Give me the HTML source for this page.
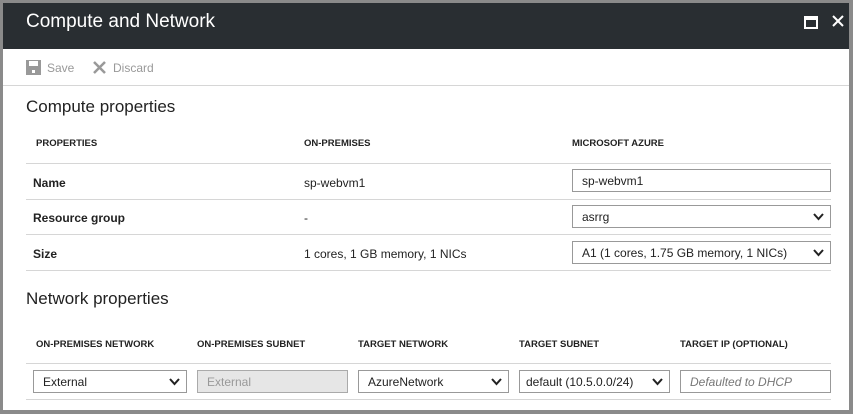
<!DOCTYPE html><html><head><style>
body{margin:0;width:853px;height:414px;background:#8a8a8a;font-family:"Liberation Sans",sans-serif;overflow:hidden;position:relative}
.p{position:absolute;left:3px;top:3px;width:846px;height:407px;background:#fff}
.h{position:absolute;left:0;top:0;width:846px;height:46px;background:#292e32;color:#fff}
.a{position:absolute}
.t{font-size:17px;color:#222}
.lb{font-size:9.5px;font-weight:bold;color:#222}
.c{font-size:12px;color:#222}
.ln{position:absolute;height:1px;background:#d6d6d6}
.in{position:absolute;border:1px solid #999;box-sizing:border-box;height:23px;font-size:12px;padding:4px 9px;color:#222;background:#fff}
.in svg{position:absolute;right:6px;top:7px}
</style></head><body>
<div class="p">
<div class="h"><div class="a" style="left:23px;top:8px;font-size:19px">Compute and Network</div>
<div class="a" style="left:801px;top:13px;width:10px;height:7px;border:2px solid #fff;border-top-width:4px"></div>
<svg class="a" style="left:829px;top:12px" width="12" height="12"><path d="M1 1L11 11M11 1L1 11" stroke="#fff" stroke-width="2"/></svg></div>
<svg class="a" style="left:23px;top:57px" width="15" height="15"><path d="M0 0H15V15H0Z" fill="#999"/><rect x="3" y="1" width="9" height="5" fill="#fff"/><rect x="6" y="10" width="3" height="3" fill="#fff"/></svg>
<div class="a c" style="left:44px;top:58px;color:#999">Save</div>
<svg class="a" style="left:90px;top:58px" width="13" height="13"><path d="M1 1L12 12M12 1L1 12" stroke="#999" stroke-width="2.5"/></svg>
<div class="a c" style="left:110px;top:58px;color:#999">Discard</div>
<div class="ln" style="left:0;top:82px;width:846px"></div>
<div class="a t" style="left:23px;top:94px">Compute properties</div>
<div class="a lb" style="left:33px;top:135px">PROPERTIES</div>
<div class="a lb" style="left:301px;top:135px">ON-PREMISES</div>
<div class="a lb" style="left:569px;top:135px">MICROSOFT AZURE</div>
<div class="ln" style="left:23px;top:160px;width:805px"></div>
<div class="ln" style="left:23px;top:196px;width:805px"></div>
<div class="ln" style="left:23px;top:231px;width:805px"></div>
<div class="ln" style="left:23px;top:267px;width:805px"></div>
<div class="a c" style="left:30px;top:173px;font-weight:bold">Name</div>
<div class="a c" style="left:30px;top:208px;font-weight:bold">Resource group</div>
<div class="a c" style="left:30px;top:244px;font-weight:bold">Size</div>
<div class="a c" style="left:301px;top:173px">sp-webvm1</div>
<div class="a c" style="left:301px;top:208px">-</div>
<div class="a c" style="left:301px;top:244px">1 cores, 1 GB memory, 1 NICs</div>
<div class="in" style="left:569px;top:166px;width:259px">sp-webvm1</div>
<div class="in" style="left:569px;top:202px;width:259px">asrrg<svg width="11" height="8"><path d="M1 1L5.5 6L10 1" stroke="#222" stroke-width="2" fill="none"/></svg></div>
<div class="in" style="left:569px;top:238px;width:259px">A1 (1 cores, 1.75 GB memory, 1 NICs)<svg width="11" height="8"><path d="M1 1L5.5 6L10 1" stroke="#222" stroke-width="2" fill="none"/></svg></div>
<div class="a t" style="left:23px;top:286px">Network properties</div>
<div class="a lb" style="left:33px;top:336px">ON-PREMISES NETWORK</div>
<div class="a lb" style="left:194px;top:336px">ON-PREMISES SUBNET</div>
<div class="a lb" style="left:355px;top:336px">TARGET NETWORK</div>
<div class="a lb" style="left:516px;top:336px">TARGET SUBNET</div>
<div class="a lb" style="left:677px;top:336px">TARGET IP (OPTIONAL)</div>
<div class="ln" style="left:23px;top:360px;width:805px"></div>
<div class="ln" style="left:23px;top:396px;width:805px"></div>
<div class="in" style="left:30px;top:367px;width:154px">External<svg width="11" height="8"><path d="M1 1L5.5 6L10 1" stroke="#222" stroke-width="2" fill="none"/></svg></div>
<div class="in" style="left:194px;top:367px;width:151px;background:#e6e6e6;color:#999;border-color:#aaa">External</div>
<div class="in" style="left:355px;top:367px;width:151px">AzureNetwork<svg width="11" height="8"><path d="M1 1L5.5 6L10 1" stroke="#222" stroke-width="2" fill="none"/></svg></div>
<div class="in" style="left:516px;top:367px;width:151px;padding-left:6px">default (10.5.0.0/24)<svg width="11" height="8"><path d="M1 1L5.5 6L10 1" stroke="#222" stroke-width="2" fill="none"/></svg></div>
<div class="in" style="left:677px;top:367px;width:151px;font-style:italic;color:#777">Defaulted to DHCP</div>
</div>
</body></html>
